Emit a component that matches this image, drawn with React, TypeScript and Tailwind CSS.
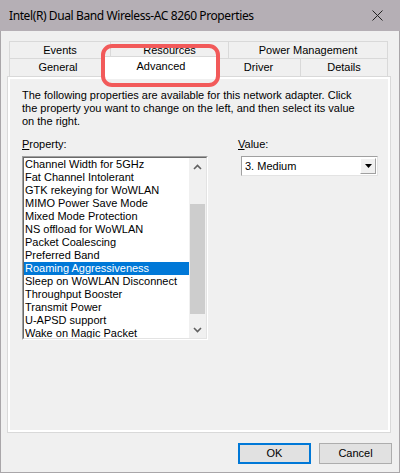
import React from "react";

const properties = [
  "Channel Width for 5GHz",
  "Fat Channel Intolerant",
  "GTK rekeying for WoWLAN",
  "MIMO Power Save Mode",
  "Mixed Mode Protection",
  "NS offload for WoWLAN",
  "Packet Coalescing",
  "Preferred Band",
  "Roaming Aggressiveness",
  "Sleep on WoWLAN Disconnect",
  "Throughput Booster",
  "Transmit Power",
  "U-APSD support",
  "Wake on Magic Packet",
];

const selected = "Roaming Aggressiveness";

function Chevron({ down }: { down?: boolean }) {
  return (
    <svg width="9" height="6" viewBox="0 0 9 6" className={down ? "rotate-180" : ""}>
      <path d="M1 5 L4.5 1.5 L8 5" fill="none" stroke="#606060" strokeWidth="1.6" />
    </svg>
  );
}

export default function App() {
  return (
    <div
      className="w-[400px] h-[473px] flex flex-col bg-[#f0f0f0] text-black text-[11px] leading-[13px] relative"
      style={{ fontFamily: '"Liberation Sans", Arial, sans-serif' }}
    >
      {/* Title bar */}
      <div className="h-[31px] shrink-0 bg-[#b5afb5] flex items-center justify-between pl-[9px]">
        <span className="text-[12px] tracking-[-0.4px] font-['Segoe_UI','Noto_Sans',sans-serif]">
          Intel(R) Dual Band Wireless-AC 8260 Properties
        </span>
        <div className="w-[46px] h-full flex items-center justify-center">
          <svg width="11" height="11" viewBox="0 0 11 11">
            <path d="M0.5 0.5 L10.5 10.5 M10.5 0.5 L0.5 10.5" stroke="#222" strokeWidth="1" />
          </svg>
        </div>
      </div>

      {/* Body */}
      <div className="flex-1 flex flex-col border-x border-b border-[#a9a6a9]">
        <div className="w-[384px] ml-[6px] mt-[10px]">
          {/* Tabs */}
          <div className="pl-[2px]">
            <div className="flex h-[17px]">
              <div className="w-[101px] border-t border-l border-[#d9d9d9] flex items-center justify-center">Events</div>
              <div className="w-[118px] border-t border-l border-[#d9d9d9] flex items-center justify-center">Resources</div>
              <div className="w-[160px] border-t border-x border-[#d9d9d9] flex items-center justify-center">Power Management</div>
            </div>
            <div className="flex h-[18px]">
              <div className="w-[97px] border-t border-l border-[#d9d9d9] flex items-center justify-center">General</div>
              <div className="w-[114px] -mx-[2px] -mt-[2px] h-[21px] relative z-10 bg-white border-t border-x border-[#d9d9d9] flex items-center justify-center pb-[2px]">
                Advanced
              </div>
              <div className="w-[84px] border-t border-l border-[#d9d9d9] flex items-center justify-center">Driver</div>
              <div className="w-[88px] border-t border-x border-[#d9d9d9] flex items-center justify-center">Details</div>
            </div>
          </div>

          {/* Panel */}
          <div className="h-[357px] border border-[#d9d9d9] bg-white p-[2px]">
            <div className="h-full bg-[#f0f0f0] pl-[12px] pt-[10px]">
              <p className="whitespace-nowrap">
                The following properties are available for this network adapter. Click
                <br />
                the property you want to change on the left, and then select its value
                <br />
                on the right.
              </p>

              <div className="flex mt-[10px]">
                <div className="w-[186px]">
                  <div>
                    <span className="underline">P</span>roperty:
                  </div>
                  <div className="mt-[5px] h-[184px] border border-t-[#a0a0a0] border-l-[#a0a0a0] border-r-white border-b-white">
                    <div className="h-full border border-t-[#696969] border-l-[#696969] border-r-[#e3e3e3] border-b-[#e3e3e3] bg-white flex overflow-hidden">
                      <ul className="flex-1">
                        {properties.map((p) => (
                          <li
                            key={p}
                            className={
                              "h-[13px] pl-[1px] whitespace-nowrap " +
                              (p === selected ? "bg-[#0078d7] text-white" : "")
                            }
                          >
                            {p}
                          </li>
                        ))}
                      </ul>
                      <div className="w-[17px] bg-[#f0f0f0] flex flex-col">
                        <div className="h-[17px] flex items-center justify-center">
                          <Chevron />
                        </div>
                        <div className="flex-1 flex flex-col pt-[29px] pb-[7px] px-[1px]">
                          <div className="flex-1 bg-[#cdcdcd]" />
                        </div>
                        <div className="h-[17px] flex items-center justify-center">
                          <Chevron down />
                        </div>
                      </div>
                    </div>
                  </div>
                </div>

                <div className="ml-[30px]">
                  <div>
                    <span className="underline">V</span>alue:
                  </div>
                  <div className="mt-[5px] ml-[3px] w-[137px] h-[20px] border border-t-[#a0a0a0] border-l-[#a0a0a0] border-r-[#e3e3e3] border-b-[#e3e3e3] bg-white flex items-center">
                    <span className="flex-1 pl-[3px]">3. Medium</span>
                    <div className="w-[16px] h-[16px] mr-[1px] bg-[#f0f0f0] border border-t-white border-l-white border-r-[#a0a0a0] border-b-[#a0a0a0] flex items-center justify-center">
                      <svg width="7" height="4" viewBox="0 0 7 4">
                        <path d="M0 0 H7 L3.5 4 Z" fill="#000" />
                      </svg>
                    </div>
                  </div>
                </div>
              </div>
            </div>
          </div>
        </div>

        {/* Buttons */}
        <div className="flex justify-end gap-[8px] mt-[10px] mr-[7px]">
          <button className="w-[73px] h-[21px] bg-[#e1e1e1] border-2 border-[#0078d7] flex items-center justify-center">
            OK
          </button>
          <button className="w-[73px] h-[21px] bg-[#e1e1e1] border border-[#adadad] flex items-center justify-center">
            Cancel
          </button>
        </div>
      </div>

      {/* Highlight around the Advanced tab */}
      <div className="absolute left-[101px] top-[44px] w-[119px] h-[43px] border-[4px] border-[#f25a5a] rounded-[11px] z-20 pointer-events-none" />
    </div>
  );
}
